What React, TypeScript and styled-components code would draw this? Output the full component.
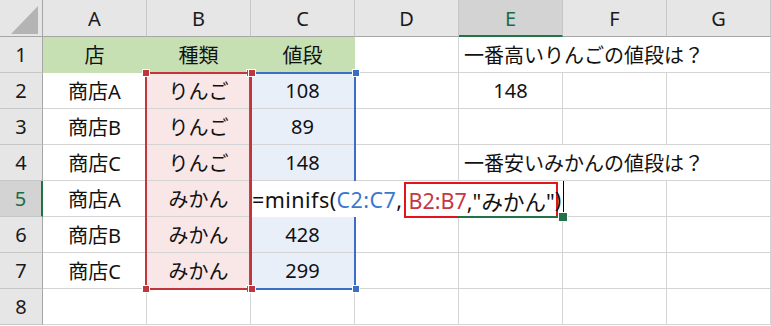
import styled, { createGlobalStyle } from 'styled-components'

const HEAD_W = 43
const HEAD_H = 37
const COL_W = 104
const ROW_H = 36

const FONT = `"Noto Sans", "Noto Sans CJK JP", sans-serif`

const GREEN = '#c6e0b4'
const PINK = '#f9e6e7'
const BLUE = '#e8eff9'
const SELECT_RED = '#c2353d'
const SELECT_BLUE = '#3b6fc6'
const EXCEL_GREEN = '#217346'

const GlobalStyle = createGlobalStyle`
  html, body {
    margin: 0;
    padding: 0;
    background: #fff;
  }
  * {
    box-sizing: border-box;
  }
`

const Sheet = styled.div`
  display: grid;
  grid-template-columns: ${HEAD_W}px repeat(7, ${COL_W}px);
  grid-template-rows: ${HEAD_H}px repeat(8, ${ROW_H}px);
  width: ${HEAD_W + 7 * COL_W}px;
  font-family: ${FONT};
  font-size: 20px;
  color: #111;
  overflow: hidden;
`

// every part sits on explicit grid lines: row 1 / column 1 are the headers
type At = { $r: number; $c: number; $span?: number }
const place = (p: At) => `
  grid-row: ${p.$r + 1};
  grid-column: ${p.$c + 1} / span ${p.$span ?? 1};
`

const Corner = styled.div`
  grid-row: 1;
  grid-column: 1;
  background: #e6e6e6;
  border-right: 1px solid #a6a6a6;
  border-bottom: 1px solid #a6a6a6;
  display: flex;
  align-items: flex-end;
  justify-content: flex-end;
  padding: 0 3px 2px 0;
`

const ColHeader = styled.div<At & { $active?: boolean }>`
  ${place}
  display: flex;
  align-items: center;
  justify-content: center;
  background: ${(p) => (p.$active ? '#d3d3d3' : '#e6e6e6')};
  color: ${(p) => (p.$active ? '#1d6b45' : '#1a1a1a')};
  border-right: 1px solid #c6c6c6;
  border-bottom: ${(p) => (p.$active ? `2px solid ${EXCEL_GREEN}` : '1px solid #a6a6a6')};
  padding-top: 1px;
`

const RowHeader = styled.div<At & { $active?: boolean }>`
  ${place}
  display: flex;
  align-items: center;
  justify-content: center;
  background: ${(p) => (p.$active ? '#d3d3d3' : '#e6e6e6')};
  color: ${(p) => (p.$active ? '#1d6b45' : '#1a1a1a')};
  border-right: ${(p) => (p.$active ? `2px solid ${EXCEL_GREEN}` : '1px solid #a6a6a6')};
  border-bottom: 1px solid #c6c6c6;
`

const Cell = styled.div<At & { $fill?: string; $lines?: boolean; $left?: boolean }>`
  ${place}
  display: flex;
  align-items: center;
  justify-content: ${(p) => (p.$left ? 'flex-start' : 'center')};
  padding-left: ${(p) => (p.$left ? '5px' : '0')};
  white-space: nowrap;
  background: ${(p) => p.$fill ?? '#fff'};
  border-right: 1px solid ${(p) => (p.$fill && !p.$lines ? p.$fill : '#d4d4d4')};
  border-bottom: 1px solid ${(p) => (p.$fill && !p.$lines ? p.$fill : '#d4d4d4')};
`

// two selection handles side by side, each a 6px square in a white ring
const handlePair = (color: string) => `
  content: '';
  position: absolute;
  left: -5px;
  width: calc(100% + 11px);
  height: 8px;
  background:
    linear-gradient(${color}, ${color}) left 1px top 1px / 6px 6px no-repeat,
    linear-gradient(${color}, ${color}) right 1px top 1px / 6px 6px no-repeat,
    linear-gradient(#fff, #fff) left / 8px 8px no-repeat,
    linear-gradient(#fff, #fff) right / 8px 8px no-repeat;
`

// outline of a referenced range, laid on the same grid tracks as its cells
const RangeBox = styled.div<{ $color: string; $col: number; $from: number; $to: number; $layer: number }>`
  position: relative;
  z-index: ${(p) => p.$layer};
  grid-column: ${(p) => p.$col + 2} / span 1;
  grid-row: ${(p) => p.$from + 1} / ${(p) => p.$to + 2};
  margin: -1px -1px -1px -2px;
  border: 2px solid ${(p) => p.$color};
  pointer-events: none;

  &::before {
    ${(p) => handlePair(p.$color)}
    top: -5px;
  }
  &::after {
    ${(p) => handlePair(p.$color)}
    bottom: -5px;
  }
`

// cell in edit mode: C5:E5 covered by the formula being typed into E5
const EditCell = styled.div`
  position: relative;
  z-index: 2;
  grid-row: 6;
  grid-column: 4 / span 3;
  margin-right: -1px;
  display: flex;
  align-items: center;
  background: #fff;
  border-right: 1px solid #000;
  padding-left: 1px;
  white-space: nowrap;
  font-size: 21.5px;

  &::before {
    content: '';
    position: absolute;
    right: -5px;
    bottom: -5px;
    width: 8px;
    height: 8px;
    background: ${EXCEL_GREEN};
    border: 1px solid #fff;
    z-index: 1;
  }
  &::after {
    content: '';
    position: absolute;
    right: -2px;
    bottom: -1px;
    width: ${COL_W + 4}px;
    height: 2px;
    background: ${EXCEL_GREEN};
  }
`

const Lead = styled.span`
  letter-spacing: 0.45px;
`

const Ref = styled.span<{ $color: string }>`
  color: ${(p) => p.$color};
`

// red frame drawn around part of the formula
const Mark = styled.span`
  align-self: flex-start;
  height: 36px;
  display: flex;
  align-items: center;
  margin: 1px -3px 0 1px;
  padding: 0 1px 0 3px;
  border: 2px solid #e3141c;
`

const rows: string[][] = [
  ['店', '種類', '値段', '', '一番高いりんごの値段は？'],
  ['商店A', 'りんご', '108', '', '148', '', ''],
  ['商店B', 'りんご', '89', '', '', '', ''],
  ['商店C', 'りんご', '148', '', '一番安いみかんの値段は？'],
  ['商店A', 'みかん', '', '', '', '', ''],
  ['商店B', 'みかん', '428', '', '', '', ''],
  ['商店C', 'みかん', '299', '', '', '', ''],
  ['', '', '', '', '', '', ''],
]

const cols = ['A', 'B', 'C', 'D', 'E', 'F', 'G']

const fillFor = (r: number, c: number) => {
  if (r === 1 && c <= 2) return GREEN
  if (r >= 2 && r <= 7 && c === 1) return PINK
  if (r >= 2 && r <= 7 && c === 2) return BLUE
  return undefined
}

const renderCell = (r: number, ci: number, text: string) => {
  if (r === 5 && ci === 2) {
    return (
      <EditCell key="edit">
        <Lead>
          =minifs(<Ref $color="#3a78d0">C2:C7</Ref>,
        </Lead>
        <Mark>
          <Ref $color="#c8363f">B2:B7</Ref>,"みかん"
        </Mark>
        )
      </EditCell>
    )
  }
  if (r === 5 && (ci === 3 || ci === 4)) return null
  const fill = fillFor(r, ci)
  const note = ci === 4 && text.length > 4
  return (
    <Cell
      key={`${r}-${ci}`}
      $r={r}
      $c={ci + 1}
      $span={note ? 3 : 1}
      $fill={fill}
      $lines={fill !== GREEN}
      $left={note}
    >
      {text}
    </Cell>
  )
}

export default function App() {
  return (
    <>
      <GlobalStyle />
      <Sheet>
        <Corner>
          <svg width="28" height="29" viewBox="0 0 28 29">
            <polygon points="0,29 27,29 27,1" fill="#b4b4b4" />
          </svg>
        </Corner>
        {cols.map((c, ci) => (
          <ColHeader key={c} $r={0} $c={ci + 1} $active={c === 'E'}>
            {c}
          </ColHeader>
        ))}
        {rows.map((cells, ri) => {
          const r = ri + 1
          return [
            <RowHeader key={`h${r}`} $r={r} $c={0} $active={r === 5}>
              {r}
            </RowHeader>,
            ...cells.map((text, ci) => renderCell(r, ci, text)),
          ]
        })}

        <RangeBox $color={SELECT_BLUE} $col={2} $from={2} $to={7} $layer={1} />
        <RangeBox $color={SELECT_RED} $col={1} $from={2} $to={7} $layer={3} />
      </Sheet>
    </>
  )
}
